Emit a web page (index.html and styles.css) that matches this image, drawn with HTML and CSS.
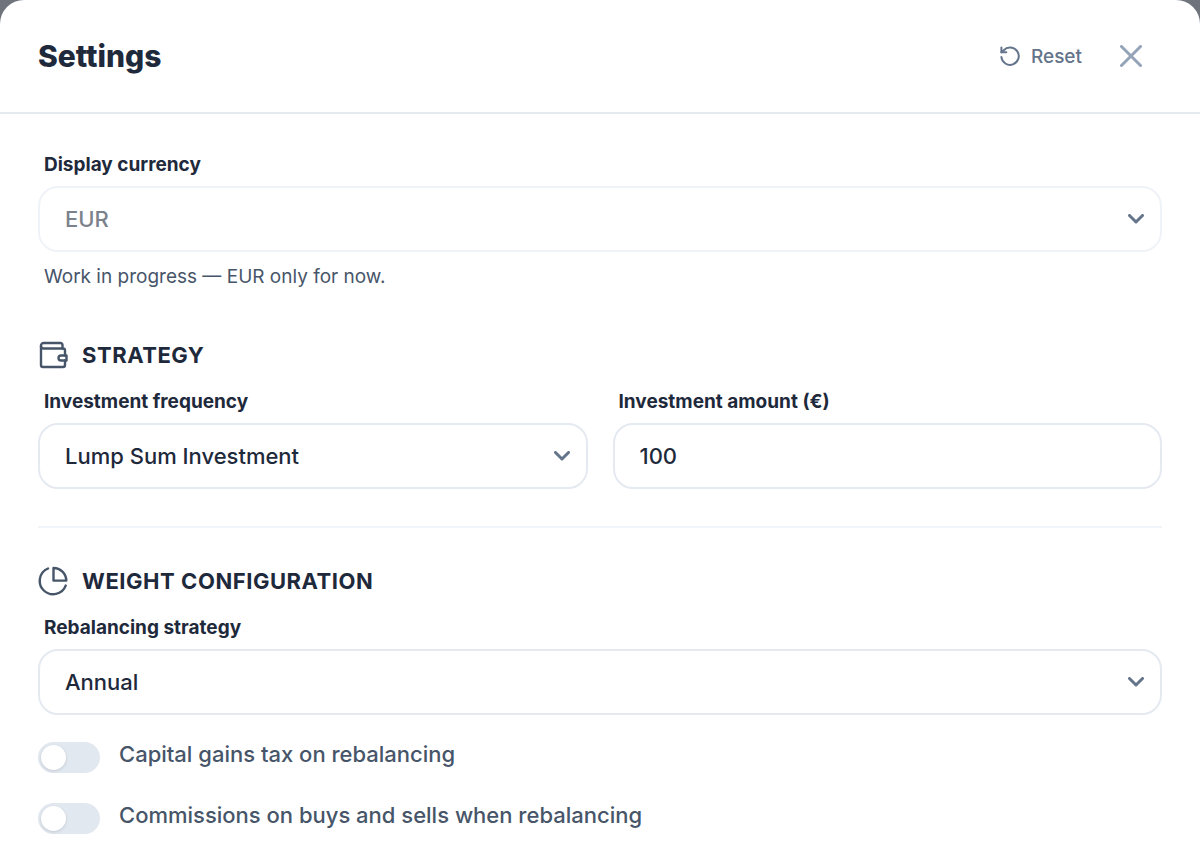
FILE: index.html
```html
<!DOCTYPE html>
<html lang="en">
<head>
  <meta charset="UTF-8" />
  <meta name="viewport" content="width=device-width, initial-scale=1" />
  <title>Settings</title>
  <link rel="stylesheet" href="styles.css">
</head>
<body>
  <main class="sheet">
    <header class="sheet-header">
      <h1>Settings</h1>
      <div class="header-actions">
        <button type="button" class="reset-button">
          <svg width="20" height="20" viewBox="0 0 20 20" aria-hidden="true">
            <path d="M1.4 11a8.7 8.7 0 1 0 2.3-6.8L1.4 6.3" />
            <path d="M1.4 1.6v4.7h4.9" />
          </svg>
          Reset
        </button>
        <button type="button" class="close-button" aria-label="Close">
          <svg width="22" height="22" viewBox="0 0 22 22" aria-hidden="true">
            <path d="M1.5 1.5l19 19M20.5 1.5l-19 19" />
          </svg>
        </button>
      </div>
    </header>

    <form class="sheet-body">
      <section class="section">
        <div class="form-group">
          <label for="currency">Display currency</label>
          <div class="select-wrap">
            <select id="currency" name="currency" disabled>
              <option>EUR</option>
            </select>
            <svg class="chevron" width="16" height="10" viewBox="0 0 16 10" aria-hidden="true"><path d="M1.5 1.5L8 8l6.5-6.5" /></svg>
          </div>
          <p class="hint">Work in progress — EUR only for now.</p>
        </div>
      </section>

      <section class="section">
        <h2>
          <svg width="30" height="30" viewBox="0 0 30 30" aria-hidden="true">
            <path d="M24.5 8.5V5a2 2 0 0 0-2-2h-17A2.5 2.5 0 0 0 3 5.5V25a2 2 0 0 0 2 2h20a2 2 0 0 0 2-2v-4.5" />
            <path d="M3 6a2.5 2.5 0 0 0 2.5 2.5H25a2 2 0 0 1 2 2v5" />
            <path d="M28.5 15.5H23a2.5 2.5 0 0 0 0 5h5.5z" />
          </svg>
          STRATEGY
        </h2>
        <div class="form-row">
          <div class="form-group">
            <label for="frequency">Investment frequency</label>
            <div class="select-wrap">
              <select id="frequency" name="frequency">
                <option>Lump Sum Investment</option>
              </select>
              <svg class="chevron" width="16" height="10" viewBox="0 0 16 10" aria-hidden="true"><path d="M1.5 1.5L8 8l6.5-6.5" /></svg>
            </div>
          </div>
          <div class="form-group">
            <label for="amount">Investment amount (€)</label>
            <input type="text" inputmode="numeric" id="amount" name="amount" value="100" />
          </div>
        </div>
      </section>

      <hr />

      <section class="section">
        <h2>
          <svg width="30" height="30" viewBox="0 0 30 30" aria-hidden="true">
            <path d="M10 2.5A13.4 13.4 0 1 0 27.7 19.6" />
            <path d="M15.5 2v12.600h12.800A12.900 12.900 0 0 0 15.5 2z" />
          </svg>
          WEIGHT CONFIGURATION
        </h2>
        <div class="form-group">
          <label for="rebalancing">Rebalancing strategy</label>
          <div class="select-wrap">
            <select id="rebalancing" name="rebalancing">
              <option>Annual</option>
            </select>
            <svg class="chevron" width="16" height="10" viewBox="0 0 16 10" aria-hidden="true"><path d="M1.5 1.5L8 8l6.5-6.5" /></svg>
          </div>
        </div>
        <div class="toggle-list">
          <div class="toggle-row">
            <input type="checkbox" role="switch" class="toggle" id="capitalGains" name="capitalGains" />
            <label for="capitalGains">Capital gains tax on rebalancing</label>
          </div>
          <div class="toggle-row">
            <input type="checkbox" role="switch" class="toggle" id="commissions" name="commissions" />
            <label for="commissions">Commissions on buys and sells when rebalancing</label>
          </div>
        </div>
      </section>
    </form>
  </main>
</body>
</html>
```

FILE: styles.css
```css
* {
  margin: 0;
  padding: 0;
  box-sizing: border-box;
}

body {
  font-family: Inter, 'Liberation Sans', sans-serif;
  background: #6f747c;
  color: #1e293b;
}

svg {
  fill: none;
  stroke: currentColor;
  stroke-width: 2;
  stroke-linecap: round;
  stroke-linejoin: round;
  flex-shrink: 0;
}

button {
  border: none;
  background: none;
  font-family: inherit;
  cursor: pointer;
}

.sheet {
  min-height: 100vh;
  background: #fff;
  border-radius: 24px 24px 0 0;
}

.sheet-header {
  display: flex;
  justify-content: space-between;
  align-items: center;
  padding: 36px 58px 36px 38px;
  border-bottom: 2px solid #e5eaf1;
}

h1 {
  font-size: 30px;
  line-height: 40px;
  font-weight: 800;
}

.header-actions {
  display: flex;
  align-items: center;
  gap: 38px;
}

.reset-button {
  display: flex;
  align-items: center;
  gap: 11px;
  font-size: 19px;
  font-weight: 500;
  color: #64748b;
}

.close-button {
  display: flex;
  color: #94a3b8;
}

.close-button svg {
  stroke-width: 3;
}

.sheet-body {
  padding: 38px 38px 28px;
}

.section + .section {
  margin-top: 49px;
}

.form-row {
  display: grid;
  grid-template-columns: 1fr 1fr;
  gap: 25px;
}

.form-group label {
  display: block;
  margin: 0 6px 8px;
  font-size: 19px;
  line-height: 26px;
  font-weight: 700;
}

h2 {
  display: flex;
  align-items: center;
  gap: 14px;
  margin-bottom: 18px;
  font-size: 22px;
  line-height: 32px;
  font-weight: 700;
  letter-spacing: 0.025em;
}

h2 svg {
  color: #475569;
  stroke-width: 2.4;
}

.select-wrap {
  position: relative;
}

select,
input[type='text'] {
  display: block;
  width: 100%;
  height: 66px;
  padding: 0 25px;
  border: 2px solid #e5eaf1;
  border-radius: 20px;
  background: #fff;
  color: #1e293b;
  font-family: inherit;
  font-size: 22px;
  font-weight: 500;
  appearance: none;
}

select:disabled {
  border-color: #eff3f8;
  color: #7b828c;
  opacity: 1;
}

.chevron {
  position: absolute;
  top: 28px;
  right: 18px;
  color: #64748b;
  stroke-width: 3;
  pointer-events: none;
}

.hint {
  margin: 12px 6px 0;
  font-size: 19px;
  line-height: 26px;
  color: #475569;
}

hr {
  margin: 37px 0;
  border: none;
  border-top: 2px solid #f1f5f9;
}

.toggle-list {
  display: flex;
  flex-direction: column;
  gap: 28px;
  margin-top: 25px;
}

.toggle-row {
  display: flex;
  align-items: flex-start;
  gap: 19px;
}

.toggle-row label {
  font-size: 22px;
  line-height: 28px;
  font-weight: 500;
  color: #475569;
}

.toggle {
  appearance: none;
  display: flex;
  flex-shrink: 0;
  width: 62px;
  height: 31px;
  margin-top: 2px;
  padding: 3px;
  border-radius: 16px;
  background: #e2e8f0;
  cursor: pointer;
}

.toggle::before {
  content: '';
  width: 25px;
  height: 25px;
  border-radius: 50%;
  background: #fff;
  box-shadow: 0 1px 3px rgba(15, 23, 42, 0.15);
}

.toggle:checked {
  justify-content: flex-end;
  background: #64748b;
}
```
